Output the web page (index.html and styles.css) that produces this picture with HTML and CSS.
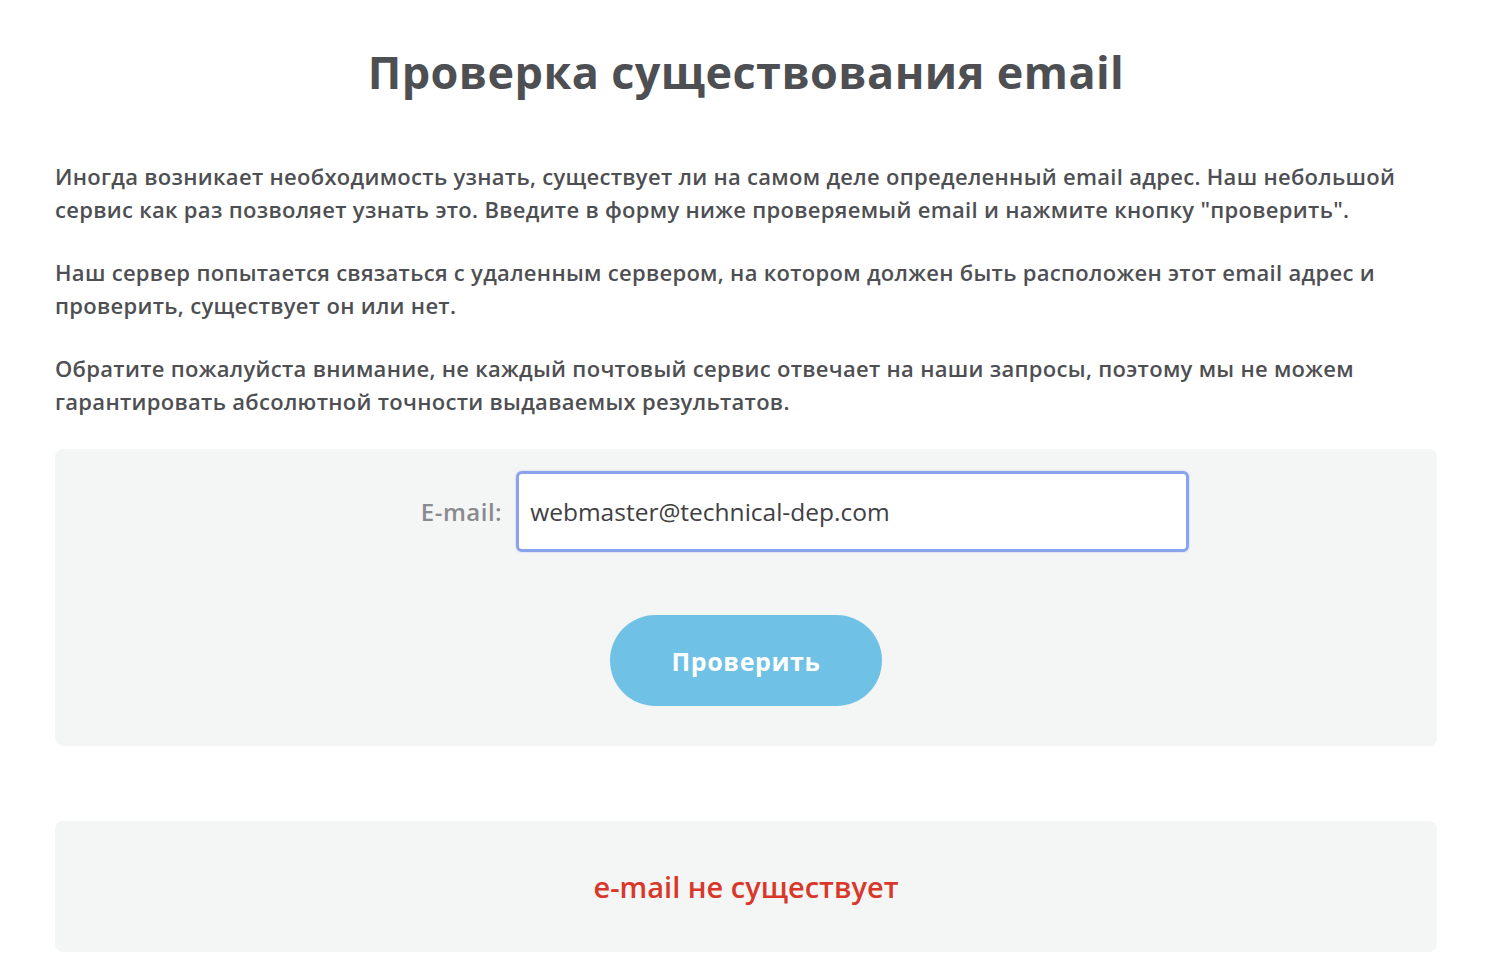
FILE: index.html
```html
<!DOCTYPE html>
<html lang="ru">
<head>
    <meta charset="UTF-8">
    <meta name="viewport" content="width=device-width, initial-scale=1.0">
    <title>Проверка существования email</title>
    <link rel="stylesheet" href="styles.css">
</head>
<body>
    <div class="page">
        <h1>Проверка существования email</h1>
        <p>Иногда возникает необходимость узнать, существует ли на самом деле определенный email адрес. Наш небольшой сервис как раз позволяет узнать это. Введите в форму ниже проверяемый email и нажмите кнопку "проверить".</p>
        <p>Наш сервер попытается связаться с удаленным сервером, на котором должен быть расположен этот email адрес и проверить, существует он или нет.</p>
        <p>Обратите пожалуйста внимание, не каждый почтовый сервис отвечает на наши запросы, поэтому мы не можем гарантировать абсолютной точности выдаваемых результатов.</p>

        <form class="panel check-form">
            <div class="form-row">
                <label for="email">E-mail:</label>
                <input type="text" id="email" name="email" value="webmaster@technical-dep.com">
            </div>
            <button type="submit">Проверить</button>
        </form>

        <div class="panel result">
            <span class="result-error">e-mail не существует</span>
        </div>
    </div>
</body>
</html>
```

FILE: styles.css
```css
body {
    margin: 0;
    background: #fff;
    font-family: "Open Sans", "Noto Sans", sans-serif;
    color: #4a4b4e;
}
.page {
    width: 1382px;
    margin-left: 55px;
    padding-top: 39px;
}
h1 {
    margin: 0 0 55px;
    text-align: center;
    font-size: 45px;
    font-weight: 700;
    letter-spacing: 0.4px;
    color: #4d4f53;
    line-height: 66px;
}
p {
    margin: 0 0 30px;
    font-size: 22px;
    letter-spacing: 0.3px;
    line-height: 33px;
    font-weight: 600;
    color: #4e4f52;
}
.panel {
    background: #f4f5f5;
    border-radius: 8px;
}
.check-form {
    margin-top: 31px;
    padding: 22px 0 40px;
    display: flex;
    flex-direction: column;
    align-items: center;
}
.form-row {
    display: flex;
    align-items: center;
    gap: 14px;
    margin-left: 118px;
}
label {
    font-size: 24px;
    letter-spacing: 0.5px;
    color: #8a8b8e;
    font-weight: 600;
}
input {
    width: 673px;
    height: 81px;
    box-sizing: border-box;
    border: 3px solid #89a3ec;
    border-radius: 6px;
    padding: 0 11px;
    font-family: inherit;
    font-size: 24.5px;
    color: #3f4043;
    background: #fff;
    outline: none;
    box-shadow: 0 0 2px rgba(120, 150, 230, 0.5);
}
button {
    margin-top: 63px;
    width: 272px;
    height: 91px;
    border: none;
    border-radius: 46px;
    background: #70c1e6;
    color: #fff;
    font-family: inherit;
    font-size: 25px;
    letter-spacing: 0.6px;
    font-weight: 700;
    cursor: pointer;
}
.result {
    margin-top: 75px;
    height: 131px;
    display: flex;
    align-items: center;
    justify-content: center;
}
.result-error {
    color: #d8382a;
    font-size: 29px;
    font-weight: 600;
}
```
